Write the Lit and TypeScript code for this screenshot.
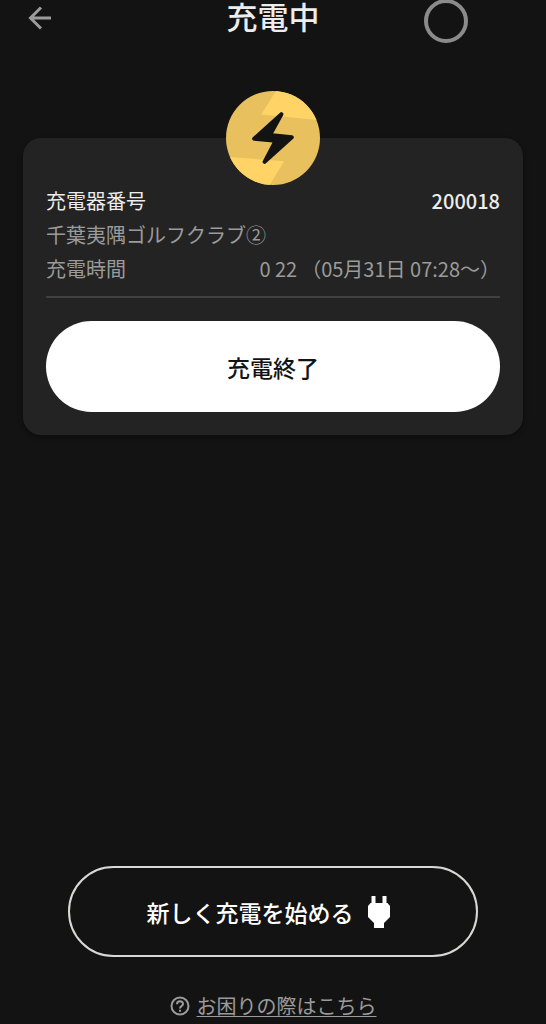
import { LitElement, html, css } from "lit";
import { customElement, property } from "lit/decorators.js";

@customElement("app-root")
export class AppRoot extends LitElement {
  @property() stationId = "200018";
  @property() stationName = "千葉夷隅ゴルフクラブ②";
  @property() elapsed = "0 22";
  @property() period = "（05月31日 07:28～）";

  static styles = css`
    :host {
      display: block;
      background: #131313;
      color: #ededed;
      font-family: "Noto Sans CJK JP", "Noto Sans", sans-serif;
      font-size: 20px;
    }
    * {
      box-sizing: border-box;
    }
    .page {
      display: flex;
      flex-direction: column;
      min-height: 100vh;
    }
    .header {
      position: relative;
      display: grid;
      grid-template-columns: 1fr auto 1fr;
      align-items: center;
      height: 36px;
      padding: 0 24px;
    }
    .back {
      display: flex;
      justify-self: start;
      padding: 0;
      border: 0;
      background: none;
      color: #9b9b9b;
    }
    .title {
      margin: 0;
      padding-bottom: 4px;
      font-size: 31px;
      line-height: 32px;
      font-weight: 500;
    }
    .ring {
      position: absolute;
      top: -1px;
      right: 78px;
      width: 44px;
      height: 44px;
      border: 4px solid #8b8b8b;
      border-radius: 50%;
    }
    .card {
      display: flex;
      flex-direction: column;
      position: relative;
      margin: 102px 23px 0;
      padding: 46px 23px 23px;
      border-radius: 18px;
      background: #232323;
      box-shadow: 0 2px 5px rgba(0, 0, 0, 0.4);
    }
    .badge {
      position: absolute;
      top: -47px;
      left: 50%;
      width: 94px;
      height: 94px;
      transform: translateX(-50%);
    }
    .details {
      margin: 0;
      padding-bottom: 10px;
      border-bottom: 2px solid #404040;
      line-height: 34px;
      color: #9b9b9b;
    }
    .row {
      display: flex;
      justify-content: space-between;
    }
    .row dt,
    .row dd {
      margin: 0;
    }
    .row dd {
      display: flex;
      gap: 4px;
    }
    .strong {
      color: #ededed;
    }
    .strong dd {
      font-weight: 500;
    }
    .pill {
      display: flex;
      align-items: center;
      justify-content: center;
      gap: 4px;
      height: 91px;
      border-radius: 46px;
      font-family: inherit;
      font-size: 23px;
      font-weight: 500;
    }
    .stop {
      margin-top: 23px;
      border: 0;
      background: #fff;
      color: #131313;
    }
    .footer {
      display: flex;
      flex-direction: column;
      margin-top: auto;
      padding: 0 68px 2px;
    }
    .start {
      border: 2px solid #d8d8d4;
      background: none;
      color: #fff;
    }
    .help {
      display: flex;
      align-items: center;
      align-self: center;
      gap: 7px;
      margin-top: 33px;
      line-height: 32px;
      color: #9b9b9b;
      text-decoration: none;
    }
    .help-text {
      text-decoration: underline;
      text-decoration-thickness: 1px;
      text-underline-offset: 2px;
    }
  `;

  render() {
    return html`
      <main class="page">
        <header class="header">
          <button class="back" aria-label="戻る">
            <svg width="32" height="32" viewBox="0 0 32 32" fill="none" stroke="currentColor" stroke-width="3">
              <path d="M27 16H7M17 5.500L6.500 16l10.500 10.500" />
            </svg>
          </button>
          <h1 class="title">充電中</h1>
          <span class="ring"></span>
        </header>

        <section class="card">
          <svg class="badge" viewBox="0 0 280 280" aria-hidden="true">
            <defs>
              <clipPath id="disc"><circle cx="140" cy="140" r="140" /></clipPath>
            </defs>
            <g clip-path="url(#disc)">
              <rect width="280" height="280" fill="#e8c15e" />
              <path d="M150 -2L105 70L280 87V-2Z" fill="#ffd366" />
              <path d="M0 196L173 209L129 282H0Z" fill="#ffd366" />
            </g>
            <path
              d="M165 69L84 142L148 148L115 211L196 138L131 131Z"
              fill="#131313"
              stroke="#131313"
              stroke-width="12"
              stroke-linejoin="round"
            />
          </svg>
          <dl class="details">
            <div class="row strong">
              <dt>充電器番号</dt>
              <dd>${this.stationId}</dd>
            </div>
            <div class="row"><dt>${this.stationName}</dt></div>
            <div class="row">
              <dt>充電時間</dt>
              <dd><span>${this.elapsed}</span><span>${this.period}</span></dd>
            </div>
          </dl>
          <button class="pill stop">充電終了</button>
        </section>

        <footer class="footer">
          <button class="pill start">
            <span>新しく充電を始める</span>
            <svg width="42" height="34" viewBox="-9 0 42 34" fill="currentColor" aria-hidden="true">
              <path d="M4.500 1h4v7h7V1h4v7h1l2.500 3v11l-6 6v5H7v-5l-6-6V11l2.500-3h1Z" />
            </svg>
          </button>
          <a class="help" href="#help">
            <svg width="20" height="20" viewBox="0 0 20 20" fill="none" stroke="currentColor" stroke-width="2" aria-hidden="true">
              <circle cx="10" cy="10" r="8.500" />
              <path d="M7 8.200C7 4.200 13 4.200 13 8C13 10 10 10.200 10 12.500M10 13.700V15.700" />
            </svg>
            <span class="help-text">お困りの際はこちら</span>
          </a>
        </footer>
      </main>
    `;
  }
}
